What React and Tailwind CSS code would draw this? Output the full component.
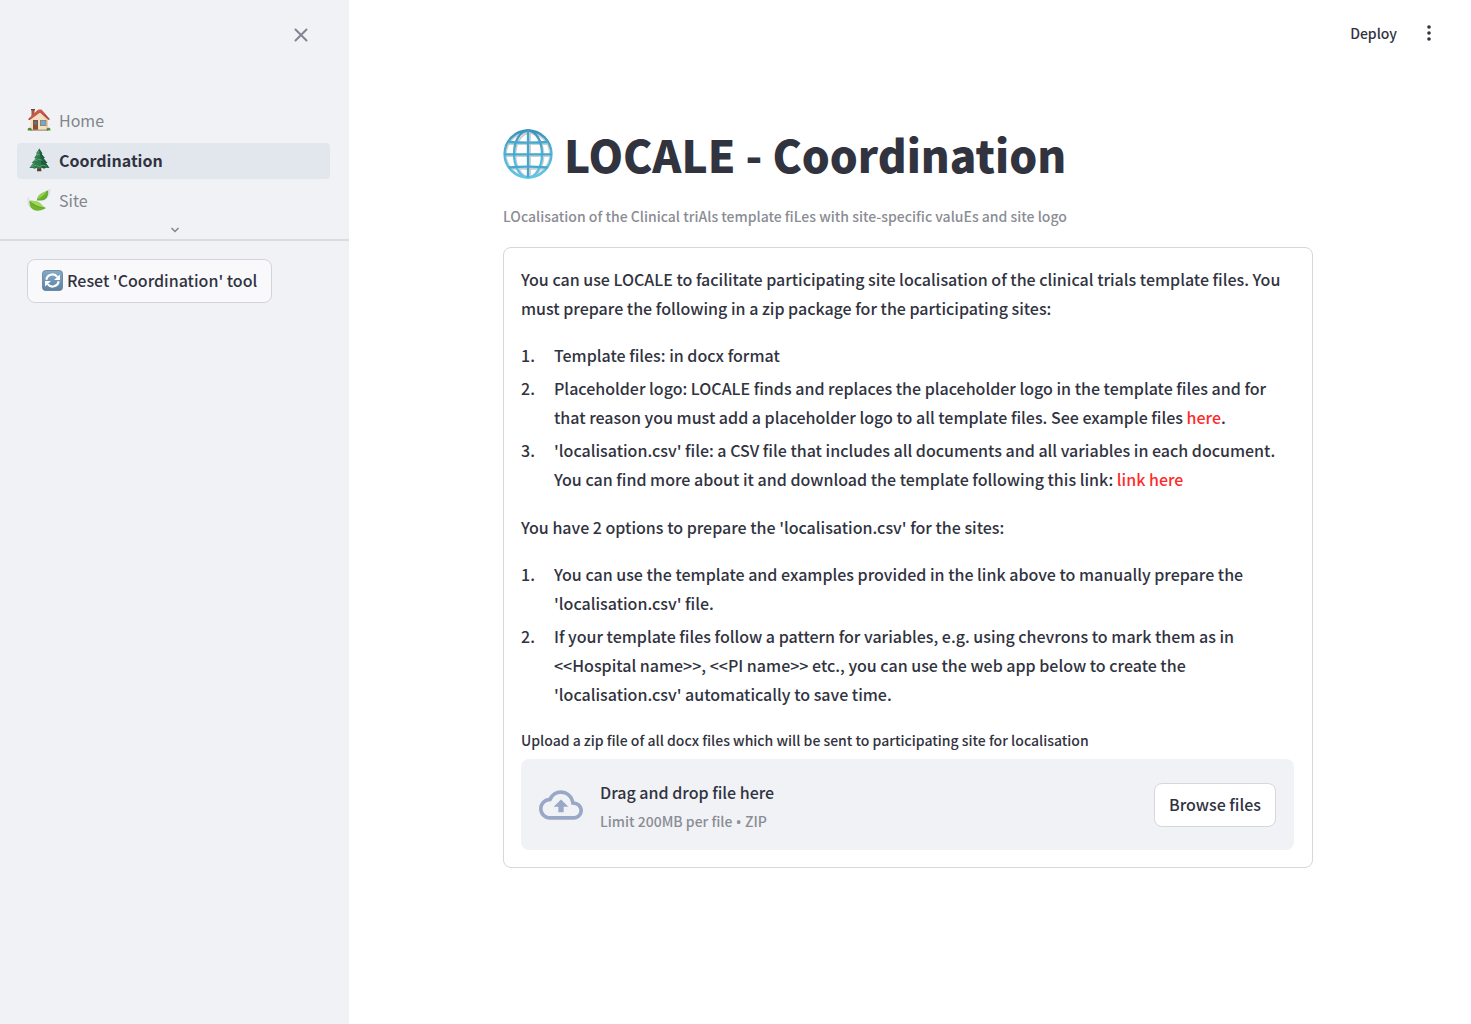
import React, { useRef } from "react";

function HouseIcon() {
  return (
    <svg viewBox="0 0 24 24" className="size-6 shrink-0" aria-hidden="true">
      <rect x="4.5" y="1.5" width="3" height="7" fill="#a8583f" />
      <rect x="4" y="1" width="4" height="1.4" fill="#7d4334" />
      <path d="M3.500 11 12.500 3.500 21 11v11H3.500z" fill="#f3dfc0" />
      <path d="M12.500 3.500 21 11v11h-2V12z" fill="#e8cfa8" />
      <path d="M1 11.200 11.300 1.800h3.200L23 11.200l-1.400.8L13 4.600 2.400 12.200z" fill="#b5443c" />
      <path d="M11.300 1.800h3.200l4 4.400-1.600.6L13 3.800 3.600 10.800 2.400 10z" fill="#cc5a50" />
      <rect x="6" y="12" width="5" height="10" fill="#8f4b2c" />
      <rect x="7" y="13.2" width="3" height="3.600" fill="#51748f" />
      <rect x="13" y="12" width="6.4" height="6" fill="#a27c53" />
      <rect x="13.8" y="12.8" width="4.8" height="4.400" fill="#62aee2" />
      <rect x="3.5" y="21.5" width="17.500" height="1.300" fill="#a9968a" />
      <path d="M.8 22.600c-.4-2 .6-3 1.800-2.800 1.400-.5 2.400.8 2.200 2.800zM19.600 22.600c-.2-2 .7-3.100 1.900-2.800 1.400-.3 2.200.8 1.900 2.800z" fill="#4d8b35" />
    </svg>
  );
}

function TreeIcon() {
  return (
    <svg viewBox="0 0 24 24" className="size-6 shrink-0" aria-hidden="true">
      <path d="M10.400 18H14l.4 5.200H10z" fill="#65371f" />
      <path d="m12.200.6 3.200 5-1 .1 3.400 4.400-1.400.2 4 4.700-1.600.1 3.600 5-3.200-.5-2 1-2.400-.9-2.600 1.200-2.400-1-2.600.8-1.400-.8-3.400.2 3.800-5-1.500-.1 4-4.600-1.400-.3L10 5.700l-1-.1z" fill="#2f7a4d" />
      <path d="m12.200.6 3.200 5-1 .1 3.400 4.400-1.400.2 4 4.700-1.600.1 3.600 5-3.200-.5-2 1-2.400-.9z" fill="#1f5d3b" />
      <path d="m11.800 3-1.600 4.400 2.600-1M10 9.400 7.200 13l4.600-1.600 3.600.8M7.600 14.600 4.400 18.600l5-1.400 3 1.400 3.600-1.400 3.400 1" fill="none" stroke="#56a070" strokeWidth="1" />
    </svg>
  );
}

function LeafIcon() {
  return (
    <svg viewBox="0 0 24 24" className="size-6 shrink-0" aria-hidden="true">
      <path d="M1.500 9.500C.4 13 1.200 17 3.600 19.600M22.800 1c.6 4.800-2.400 9.600-7.400 11.200" fill="none" stroke="#cfd5d4" strokeWidth=".9" />
      <path d="M2.400 13c3-.6 9 .1 11.500 3 1.700 2 3.200 3.400 4.600 4-3.500 2.700-8.800 3.700-12.500 1.500C3.200 19.800 2.200 16.500 2.400 13z" fill="#70b52f" />
      <path d="M2.400 13c3-.6 9 .1 11.500 3 1.700 2 3.200 3.400 4.600 4-5-.2-11-2.200-16.100-7z" fill="#a3d65b" />
      <path d="M10 12.200c.3-4.600 3.800-7.400 11.200-9.800.6 5.400-1.700 9.200-5.600 9.900-2.200.4-4 .1-5.600-.1z" fill="#66ae2b" />
      <path d="M10 12.200c.3-4.600 3.800-7.400 11.200-9.800-2 4-5.600 7.600-11.200 9.800z" fill="#98cf51" />
      <path d="M2.600 13.200c4.800 4.400 10 6.600 15.900 6.800M10 12.200C14.500 10 18 7 21 2.600" fill="none" stroke="#4a8a20" strokeWidth=".6" />
    </svg>
  );
}

function ReloadIcon() {
  return (
    <svg viewBox="0 0 22 22" className="size-[21px] shrink-0" aria-hidden="true">
      <defs>
        <linearGradient id="reload-fill" x1="0" y1="0" x2="0" y2="1">
          <stop offset="0" stopColor="#86abc9" />
          <stop offset="1" stopColor="#5c81a2" />
        </linearGradient>
      </defs>
      <rect x=".5" y=".5" width="21" height="21" rx="3.500" fill="url(#reload-fill)" stroke="#587994" strokeWidth=".8" />
      <path d="M4.600 10.200C5.400 4.600 12.600 2.800 16 7.200M17.400 11.800C16.600 17.400 9.400 19.200 6 14.800" fill="none" stroke="#fff" strokeWidth="2.300" />
      <path d="M18.800 4.600v6h-6.200zM3.200 17.400v-6h6.200z" fill="#fff" />
    </svg>
  );
}

function GlobeIcon() {
  return (
    <svg viewBox="0 0 50 50" className="size-[50px] shrink-0" aria-hidden="true">
      <defs>
        <linearGradient id="globe-line" x1="0" y1="0" x2="0" y2="1">
          <stop offset="0" stopColor="#3a93b8" />
          <stop offset=".5" stopColor="#4fb4d8" />
          <stop offset="1" stopColor="#5fc6e6" />
        </linearGradient>
      </defs>
      <g fill="none" stroke="#c9ced4" strokeWidth="1.800">
        <path d="M3 27.200h44M6 15h38M6 39.800h38M27 2v46" />
        <ellipse cx="26.500" cy="26" rx="14" ry="22" />
        <circle cx="25" cy="25.500" r="22" />
      </g>
      <g fill="none" stroke="url(#globe-line)" strokeWidth="2.300">
        <circle cx="25" cy="25" r="23.500" />
        <ellipse cx="25" cy="25" rx="14" ry="23.500" />
        <path d="M25 1.500v47" stroke="#45a5ca" />
        <path d="M1.500 25.400h47M5.500 13c12 .8 27 .8 39 0M5.500 38.500c12-1 27-1 39 0" stroke="#45a9ce" />
      </g>
    </svg>
  );
}

const pages = [
  { name: "Home", Icon: HouseIcon },
  { name: "Coordination", Icon: TreeIcon, current: true },
  { name: "Site", Icon: LeafIcon },
];

function Sidebar() {
  return (
    <aside className="flex w-[349px] shrink-0 flex-col bg-[#f0f2f6]">
      <div className="flex justify-end pt-[23px] pr-9">
        <button type="button" aria-label="Close sidebar" className="p-1 text-[#808495]">
          <svg viewBox="0 0 16 16" className="size-4" fill="none" stroke="currentColor" strokeWidth="2" strokeLinecap="round">
            <path d="m2.500 2.500 11 11M13.500 2.500l-11 11" />
          </svg>
        </button>
      </div>
      <nav className="mt-14 flex flex-col gap-1 pr-[19px] pl-[17px]">
        {pages.map(({ name, Icon, current }) => (
          <a
            key={name}
            href={"#" + name.toLowerCase()}
            aria-current={current ? "page" : undefined}
            className={
              current
                ? "flex h-9 items-center gap-2 rounded bg-[#e2e7ee] px-2.5 pb-0.5 font-bold text-[#31333f]"
                : "flex h-9 items-center gap-2 rounded px-2.5 pb-0.5 text-[#83858c]"
            }
          >
            <Icon />
            {name}
          </a>
        ))}
      </nav>
      <button type="button" aria-label="Show more pages" className="flex h-[22px] items-center justify-center border-b-2 border-[#dadce1] pt-0.5 text-[#83858c]">
        <svg viewBox="0 0 10 8" className="h-2 w-2.5" fill="none" stroke="currentColor" strokeWidth="1.500">
          <path d="m1.500 2 3.500 3.500L8.500 2" />
        </svg>
      </button>
      <div className="px-[27px] pt-[18px]">
        <button type="button" className="flex h-11 items-center gap-1 rounded-lg border border-[#d3d4d9] bg-[#f9f9fb] px-3.5 pb-0.5 font-medium whitespace-nowrap">
          <ReloadIcon />
          Reset 'Coordination' tool
        </button>
      </div>
    </aside>
  );
}

function Item({ number, children }) {
  return (
    <li className="flex">
      <span className="w-[33px] shrink-0">{number}.</span>
      <p>{children}</p>
    </li>
  );
}

function Uploader() {
  const input = useRef(null);
  return (
    <div className="pt-px">
      <label htmlFor="zip-file" className="block text-sm leading-6">
        Upload a zip file of all docx files which will be sent to participating site for localisation
      </label>
      <input ref={input} id="zip-file" type="file" accept=".zip" className="hidden" />
      <div className="mt-[7px] flex items-center rounded-lg bg-[#f0f2f6] p-[18px]">
        <svg viewBox="0 0 24 24" className="size-11 shrink-0" fill="#98a8c6" aria-hidden="true">
          <path d="M19.350 10.040A7.490 7.490 0 0 0 12 4C9.110 4 6.600 5.640 5.350 8.040A5.994 5.994 0 0 0 0 14c0 3.310 2.690 6 6 6h13c2.760 0 5-2.240 5-5 0-2.640-2.050-4.780-4.650-4.960zM19 18H6c-2.210 0-4-1.790-4-4 0-2.050 1.530-3.760 3.560-3.970l1.070-.11.5-.95A5.469 5.469 0 0 1 12 6c2.620 0 4.880 1.860 5.390 4.430l.3 1.500 1.530.11A2.980 2.980 0 0 1 22 15c0 1.650-1.350 3-3 3zM8 13h2.550v3h2.900v-3H16l-4-4z" />
        </svg>
        <div className="ml-[17px] flex grow flex-col">
          <span className="leading-[30px]">Drag and drop file here</span>
          <small className="mt-1 font-['Noto_Sans','Noto_Sans_CJK_SC',sans-serif] text-sm leading-[21px] text-[#8b8d94]">
            <span className="font-['Noto_Sans_CJK_SC',sans-serif]">Limit 200MB per file</span> •{" "}
            <span className="font-['Noto_Sans_CJK_SC',sans-serif]">ZIP</span>
          </small>
        </div>
        <button type="button" onClick={() => input.current.click()} className="h-11 rounded-lg border border-[#d6d7db] bg-white px-3.5 font-medium whitespace-nowrap">
          Browse files
        </button>
      </div>
    </div>
  );
}

export default function App() {
  return (
    <div className="flex min-h-screen bg-white font-['Noto_Sans_CJK_SC','Noto_Sans',sans-serif] text-base text-[#31333f]">
      <Sidebar />
      <div className="flex min-w-0 grow flex-col">
        <header className="flex items-center justify-end gap-5 pt-[21px] pr-[30px]">
          <button type="button" className="text-sm leading-6 font-medium">Deploy</button>
          <button type="button" aria-label="Main menu" className="p-1">
            <svg viewBox="0 0 16 16" className="size-4" fill="currentColor">
              <circle cx="8" cy="2" r="1.800" />
              <circle cx="8" cy="8" r="1.800" />
              <circle cx="8" cy="14" r="1.800" />
            </svg>
          </button>
        </header>
        <main className="mx-auto w-full max-w-[814px] pt-[75px] pr-1">
          <h1 className="flex items-center gap-[11px] text-[44px] leading-[68px] font-black">
            <GlobeIcon />
            LOCALE - Coordination
          </h1>
          <p className="mt-4 text-sm leading-6 font-medium text-[#8b8d94]">
            LOcalisation of the Clinical triAls template fiLes with site-specific valuEs and site logo
          </p>
          <section className="mt-[19px] flex flex-col gap-[18px] rounded-lg border border-[#d6d7db] p-[17px] pr-[18px] leading-[29px] font-medium">
            <p>
              You can use LOCALE to facilitate participating site localisation of the clinical trials template files. You must
              prepare the following in a zip package for the participating sites:
            </p>
            <ol className="flex flex-col gap-1 pr-3">
              <Item number={1}>Template files: in docx format</Item>
              <Item number={2}>
                Placeholder logo: LOCALE finds and replaces the placeholder logo in the template files and for that reason you
                must add a placeholder logo to all template files. See example files{" "}
                <a href="#examples" className="text-[#ff2b2b]">here</a>.
              </Item>
              <Item number={3}>
                'localisation.csv' file: a CSV file that includes all documents and all variables in each document. You can
                find more about it and download the template following this link:{" "}
                <a href="#template" className="text-[#ff2b2b]">link here</a>
              </Item>
            </ol>
            <p className="pt-px">You have 2 options to prepare the 'localisation.csv' for the sites:</p>
            <ol className="flex flex-col gap-1 pr-3">
              <Item number={1}>
                You can use the template and examples provided in the link above to manually prepare the 'localisation.csv'
                file.
              </Item>
              <Item number={2}>
                If your template files follow a pattern for variables, e.g. using chevrons to mark them as in{" "}
                {"<<Hospital name>>, <<PI name>>"} etc., you can use the web app below to create the 'localisation.csv'
                automatically to save time.
              </Item>
            </ol>
            <Uploader />
          </section>
        </main>
      </div>
    </div>
  );
}
